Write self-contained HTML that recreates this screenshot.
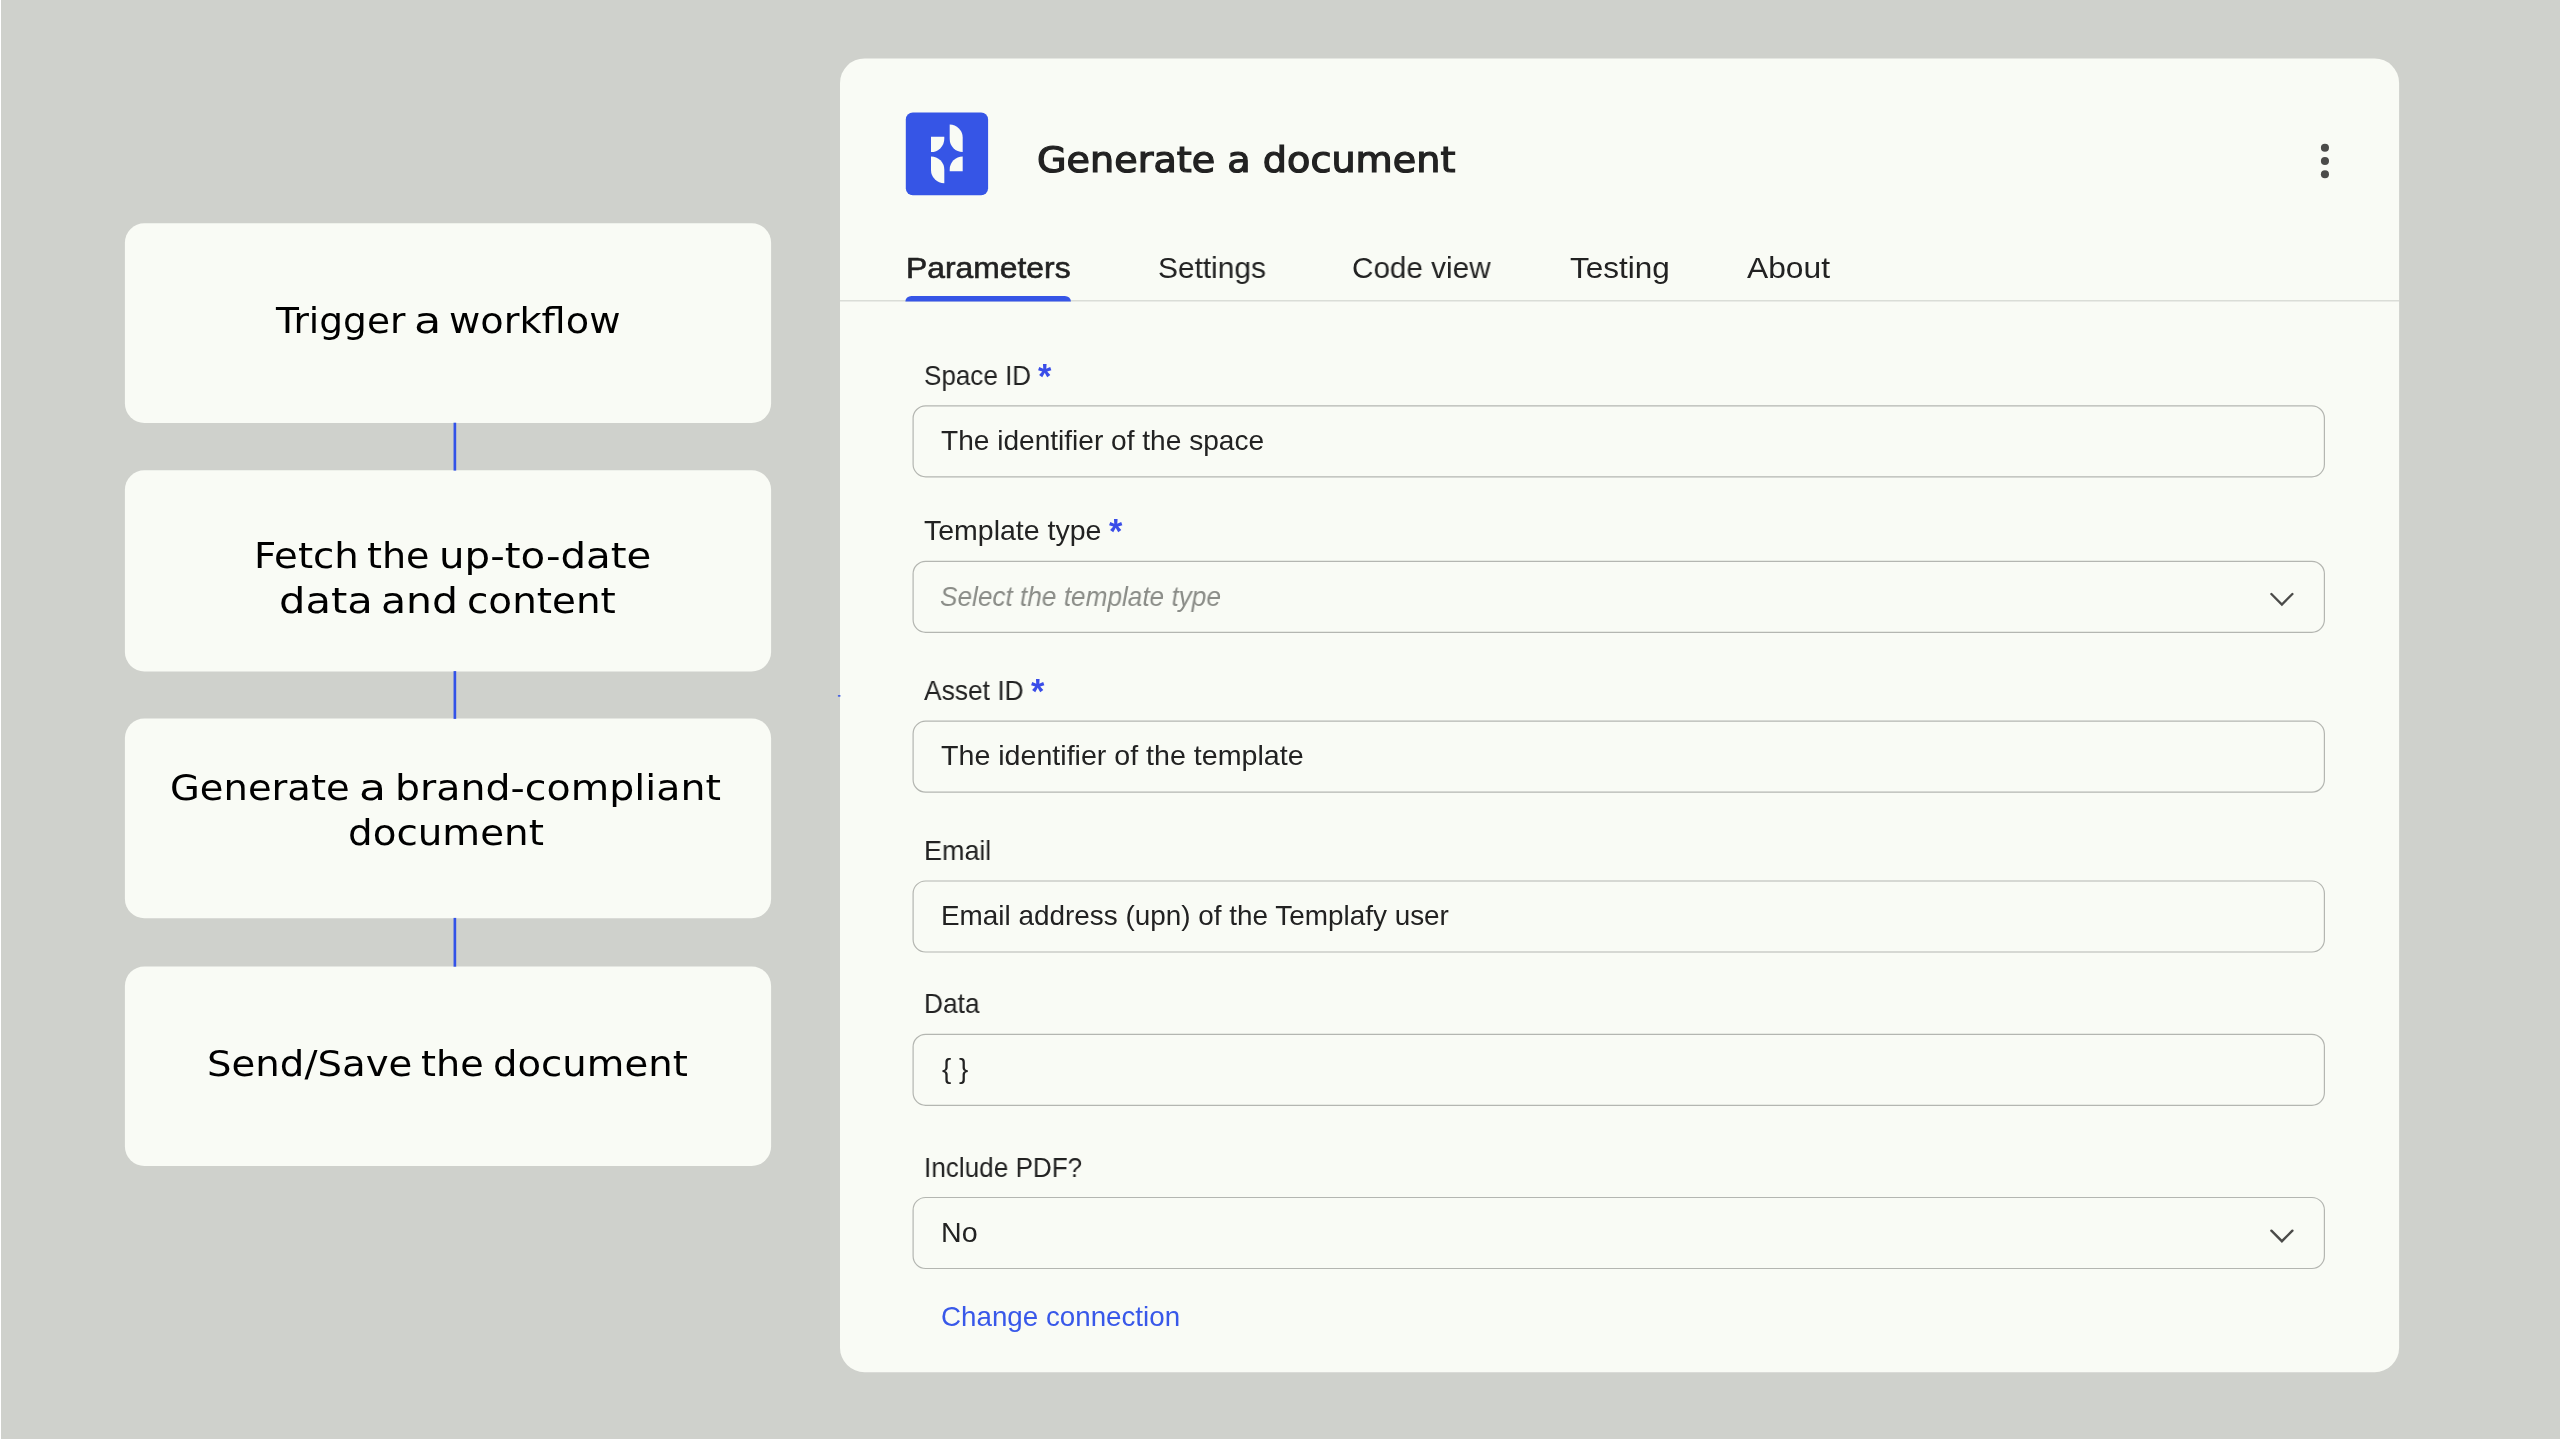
<!DOCTYPE html>
<html lang="en">
<head>
<meta charset="utf-8">
<title>Generate a document</title>
<style>
html,body{margin:0;padding:0}
body{width:2560px;height:1439px;overflow:hidden;position:relative;background:#cfd1cc;font-family:"Liberation Sans", sans-serif;color:#222222}
svg.shapes{position:absolute;left:0;top:0}
.t{position:absolute;white-space:nowrap;line-height:1;margin:0;will-change:transform;transform-origin:0 0}
.ln{margin:0;padding:0;position:absolute;left:0;top:0;width:0;height:0;font-size:0}
.sans{font-family:"Liberation Sans", sans-serif}
.deja{font-family:"DejaVu Sans", "Liberation Sans", sans-serif}
</style>
</head>
<body>
<svg class="shapes" width="2560" height="1439" viewBox="0 0 2560 1439">
<rect x="0" y="0" width="1" height="1439" fill="#ffffff"/>
<g fill="#f9fbf5">
<rect x="124.9" y="223.2" width="646.20" height="199.80" rx="19.5" ry="19.5"/>
<rect x="124.9" y="470.3" width="646.20" height="201.10" rx="19.5" ry="19.5"/>
<rect x="124.9" y="718.6" width="646.20" height="199.60" rx="19.5" ry="19.5"/>
<rect x="124.9" y="966.4" width="646.20" height="199.60" rx="19.5" ry="19.5"/>
<rect x="840" y="58.5" width="1559.10" height="1313.70" rx="24.5" ry="24.5"/>
</g>
<g fill="#3252e8">
<rect x="453.55" y="422.7" width="2.65" height="47.9"/>
<rect x="453.55" y="671.1" width="2.65" height="47.8"/>
<rect x="453.55" y="917.9" width="2.65" height="48.8"/>
<rect x="837.8" y="694.9" width="2.8" height="1.8" rx="0.8" fill="#4460e2"/>
</g>
<rect x="840" y="300.2" width="1559.1" height="1.2" fill="#d3d5d0"/>
<path d="M905.4 301.5 V301.3 a6 5.4 0 0 1 6 -5.4 H1064.9 a6 5.4 0 0 1 6 5.4 V301.5 Z" fill="#3655e6"/>
<g fill="none" stroke="#b4b6b1" stroke-width="1.2">
<rect x="913.1" y="405.8" width="1411.3" height="71" rx="12.5" ry="12.5"/>
<rect x="913.1" y="561.3" width="1411.3" height="71" rx="12.5" ry="12.5"/>
<rect x="913.1" y="721.2" width="1411.3" height="71" rx="12.5" ry="12.5"/>
<rect x="913.1" y="881.0" width="1411.3" height="71" rx="12.5" ry="12.5"/>
<rect x="913.1" y="1034.3" width="1411.3" height="71" rx="12.5" ry="12.5"/>
<rect x="913.1" y="1197.5" width="1411.3" height="71" rx="12.5" ry="12.5"/>
</g>
<g>
<rect x="905.8" y="112.4" width="82.3" height="82.8" rx="7" fill="#3655e6"/>
<g fill="#f9fbf5">
<path d="M931 136.7 H944.3 V138.8 A13.3 13.3 0 0 1 931 152.1 Z"/>
<path d="M949.7 124.6 A13 13 0 0 1 962.7 137.6 V152.1 A13 13 0 0 1 949.7 139.1 Z"/>
<path d="M931 156.4 A13.3 13.3 0 0 1 944.3 169.7 V183.2 A13.3 13.3 0 0 1 931 169.9 Z"/>
<path d="M962.7 156.4 V171.3 H949.7 V169.4 A13 13 0 0 1 962.7 156.4 Z"/>
</g></g>
<g fill="#4b4b49"><circle cx="2324.95" cy="147.8" r="4.05"/><circle cx="2324.95" cy="161.05" r="4.05"/><circle cx="2324.95" cy="174.3" r="4.05"/></g>
<g fill="none" stroke="#4b4b49" stroke-width="2.4" stroke-linecap="round" stroke-linejoin="miter"><path d="M2271.4 594 L2281.9 604.5 L2292.4 594"/><path d="M2271.4 1230.7 L2281.9 1241.2 L2292.4 1230.7"/></g>
</svg>
<p class="ln"><span class="t deja" style="left:276.0px;top:304.0px;font-size:35px;transform:scaleX(1.0727);color:#000;">Trigger</span> <span class="t deja" style="left:413.6px;top:304.0px;font-size:35px;transform:scaleX(1.2706);color:#000;">a</span> <span class="t deja" style="left:449.4px;top:304.0px;font-size:35px;transform:scaleX(1.0935);color:#000;">workflow</span></p>
<p class="ln"><span class="t deja" style="left:254.2px;top:538.6px;font-size:35px;transform:scaleX(1.1045);color:#000;">Fetch</span> <span class="t deja" style="left:367.0px;top:538.6px;font-size:35px;transform:scaleX(1.0891);color:#000;">the</span> <span class="t deja" style="left:438.5px;top:538.6px;font-size:35px;transform:scaleX(1.1522);color:#000;">up-to-date</span></p>
<p class="ln"><span class="t deja" style="left:278.8px;top:583.7px;font-size:35px;transform:scaleX(1.1892);color:#000;">data</span> <span class="t deja" style="left:381.4px;top:583.7px;font-size:35px;transform:scaleX(1.1705);color:#000;">and</span> <span class="t deja" style="left:467.2px;top:583.7px;font-size:35px;transform:scaleX(1.1107);color:#000;">content</span></p>
<p class="ln"><span class="t deja" style="left:170.1px;top:770.8px;font-size:35px;transform:scaleX(1.0994);color:#000;">Generate</span> <span class="t deja" style="left:358.8px;top:770.8px;font-size:35px;transform:scaleX(1.2588);color:#000;">a</span> <span class="t deja" style="left:394.6px;top:770.8px;font-size:35px;transform:scaleX(1.1284);color:#000;">brand-compliant</span></p>
<p class="ln"><span class="t deja" style="left:347.7px;top:815.7px;font-size:35px;transform:scaleX(1.1092);color:#000;">document</span></p>
<p class="ln"><span class="t deja" style="left:207.1px;top:1046.9px;font-size:35px;transform:scaleX(1.1049);color:#000;">Send/Save</span> <span class="t deja" style="left:420.8px;top:1046.9px;font-size:35px;transform:scaleX(1.0909);color:#000;">the</span> <span class="t deja" style="left:493.4px;top:1046.9px;font-size:35px;transform:scaleX(1.1029);color:#000;">document</span></p>
<div class="t deja" style="left:1037.1px;top:142.7px;font-size:35px;transform:scaleX(1.0903);color:#222222;-webkit-text-stroke:1.2px #222222;">Generate a document</div>
<div class="t sans" style="left:905.9px;top:253.2px;font-size:30px;transform:scaleX(1.0614);color:#222222;-webkit-text-stroke:0.6px #222222;">Parameters</div>
<div class="t sans" style="left:1158.1px;top:253.0px;font-size:30px;transform:scaleX(0.9953);color:#222222;">Settings</div>
<div class="t sans" style="left:1351.9px;top:253.0px;font-size:30px;transform:scaleX(0.9892);color:#222222;">Code view</div>
<div class="t sans" style="left:1570.1px;top:253.0px;font-size:30px;transform:scaleX(1.0495);color:#222222;">Testing</div>
<div class="t sans" style="left:1747.4px;top:253.0px;font-size:30px;transform:scaleX(1.0590);color:#222222;">About</div>
<div class="t sans" style="left:923.6px;top:362.0px;font-size:27.6px;transform:scaleX(0.9432);color:#222222;">Space ID</div>
<div class="t sans" style="left:923.8px;top:517.3px;font-size:27.6px;transform:scaleX(1.0327);color:#222222;">Template type</div>
<div class="t sans" style="left:923.9px;top:677.3px;font-size:27.6px;transform:scaleX(0.9563);color:#222222;">Asset ID</div>
<div class="t sans" style="left:923.8px;top:837.0px;font-size:27.6px;transform:scaleX(0.9754);color:#222222;">Email</div>
<div class="t sans" style="left:924.2px;top:990.2px;font-size:27.6px;transform:scaleX(0.9526);color:#222222;">Data</div>
<div class="t sans" style="left:924.2px;top:1153.8px;font-size:27.6px;transform:scaleX(0.9463);color:#222222;">Include PDF?</div>
<div class="t sans" style="left:941.2px;top:427.2px;font-size:27.6px;transform:scaleX(1.0174);color:#222222;">The identifier of the space</div>
<div class="t sans" style="left:940.3px;top:582.8px;font-size:27.6px;transform:scaleX(0.9490);color:#8a8c87;font-style:italic;">Select the template type</div>
<div class="t sans" style="left:941.2px;top:742.3px;font-size:27.6px;transform:scaleX(1.0367);color:#222222;">The identifier of the template</div>
<div class="t sans" style="left:941.1px;top:902.3px;font-size:27.6px;transform:scaleX(1.0106);color:#222222;">Email address (upn) of the Templafy user</div>
<div class="t sans" style="left:941.6px;top:1054.8px;font-size:27.6px;transform:scaleX(1.0077);color:#222222;">{ }</div>
<div class="t sans" style="left:941.2px;top:1218.9px;font-size:27.6px;transform:scaleX(1.0375);color:#222222;">No</div>
<div class="t sans" style="left:941.1px;top:1302.6px;font-size:27.6px;transform:scaleX(1.0055);color:#3858e9;">Change connection</div>
<div class="t sans" style="left:1038.1px;top:359.0px;font-size:34.4px;font-weight:bold;color:#3a4de8">*</div>
<div class="t sans" style="left:1108.9px;top:514.2px;font-size:34.4px;font-weight:bold;color:#3a4de8">*</div>
<div class="t sans" style="left:1031.4px;top:674.3px;font-size:34.4px;font-weight:bold;color:#3a4de8">*</div>
</body>
</html>
